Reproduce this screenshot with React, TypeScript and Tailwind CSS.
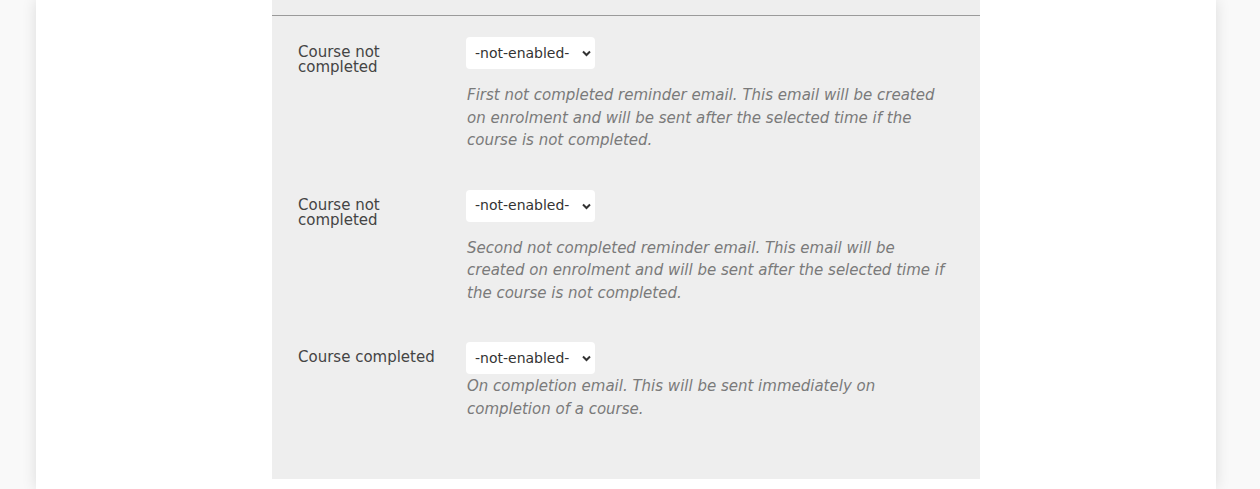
import React from 'react';

const rows = [
  {
    label: 'Course not completed',
    desc: 'First not completed reminder email. This email will be created on enrolment and will be sent after the selected time if the course is not completed.',
    gap: true,
  },
  {
    label: 'Course not completed',
    desc: 'Second not completed reminder email. This email will be created on enrolment and will be sent after the selected time if the course is not completed.',
    gap: true,
  },
  {
    label: 'Course completed',
    desc: 'On completion email. This will be sent immediately on completion of a course.',
    gap: false,
  },
];

function Select() {
  return (
    <div className="relative inline-block align-top">
      <select
        defaultValue="off"
        style={{ appearance: 'none', WebkitAppearance: 'none' }}
        className="appearance-none bg-white rounded-[4px] h-8 w-[129px] pl-[9px] pr-[20px] text-[14px] text-[#333] outline-none font-['DejaVu_Sans',sans-serif]"
      >
        <option value="off">-not-enabled-</option>
      </select>
      <svg
        className="absolute right-[4px] top-[13px] pointer-events-none"
        width="9"
        height="7"
        viewBox="0 0 9 7"
      >
        <path d="M1 1.5 L4.5 5 L8 1.5" fill="none" stroke="#333" strokeWidth="2" />
      </svg>
    </div>
  );
}

export default function App() {
  return (
    <div className="h-[489px] overflow-hidden bg-[#f9f9f9] font-['DejaVu_Sans',sans-serif]">
      <div className="ml-[36px] w-[1180px] h-full bg-white shadow-[0_0_14px_rgba(0,0,0,0.12)]">
        <div className="ml-[236px] w-[708px] bg-[#eeeeee] pb-[59px]">
          <div className="h-[16px] border-b border-[#9a9a9a]" />
          <div className="pt-[21px] pl-[26px] pr-[30px] flex flex-col gap-[38px]">
            {rows.map((r, i) => (
              <div key={i} className="flex">
                <div className="w-[168px] shrink-0 pt-[8px] pr-[20px] text-[15px] leading-[15px] text-[#444]">
                  {r.label}
                </div>
                <div className="flex-1">
                  <Select />
                  <p
                    className={
                      'italic text-[15px] leading-[22.5px] text-[#7a7a7a] pl-[1px] ' +
                      (r.gap ? 'mt-[15px]' : 'mt-[1px]')
                    }
                  >
                    {r.desc}
                  </p>
                </div>
              </div>
            ))}
          </div>
        </div>
      </div>
    </div>
  );
}
